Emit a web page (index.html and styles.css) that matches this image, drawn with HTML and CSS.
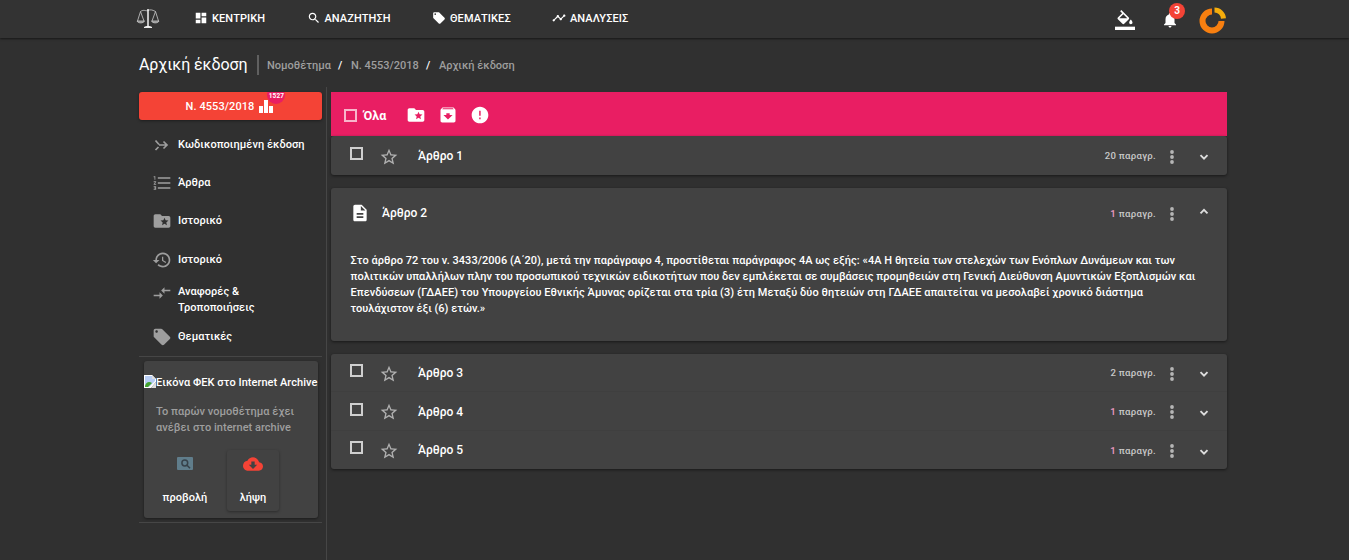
FILE: index.html
```
<!DOCTYPE html>
<html lang="el">
<head>
<meta charset="utf-8">
<title>Αρχική έκδοση</title>
<link rel="stylesheet" href="styles.css">
</head>
<body>
<svg class="defs" width="0" height="0">
<symbol id="dash" viewBox="0 0 24 24"><path d="M3 13h8V3H3v10zm0 8h8v-6H3v6zm10 0h8V11h-8v10zm0-18v6h8V3h-8z"/></symbol>
<symbol id="search" viewBox="0 0 24 24"><path d="M15.5 14h-.79l-.28-.27C15.41 12.59 16 11.11 16 9.5 16 5.91 13.09 3 9.5 3S3 5.91 3 9.5 5.91 16 9.5 16c1.61 0 3.09-.59 4.23-1.57l.27.28v.79l5 4.99L20.49 19l-4.99-5zm-6 0C7.01 14 5 11.99 5 9.5S7.01 5 9.5 5 14 7.01 14 9.5 11.99 14 9.5 14z"/></symbol>
<symbol id="tag" viewBox="0 0 24 24"><path d="M21.41 11.58l-9-9C12.05 2.22 11.55 2 11 2H4c-1.1 0-2 .9-2 2v7c0 .55.22 1.05.59 1.42l9 9c.36.36.86.58 1.41.58.55 0 1.05-.22 1.41-.59l7-7c.37-.36.59-.86.59-1.41 0-.55-.23-1.06-.59-1.42zM5.5 7C4.67 7 4 6.33 4 5.5S4.67 4 5.5 4 7 4.67 7 5.5 6.33 7 5.5 7z"/></symbol>
<symbol id="line" viewBox="0 0 24 24"><path d="M23 8c0 1.1-.9 2-2 2-.18 0-.35-.02-.51-.07l-3.56 3.55c.05.16.07.34.07.52 0 1.1-.9 2-2 2s-2-.9-2-2c0-.18.02-.36.07-.52l-2.55-2.55c-.16.05-.34.07-.52.07s-.36-.02-.52-.07l-4.55 4.56c.05.16.07.33.07.51 0 1.1-.9 2-2 2s-2-.9-2-2 .9-2 2-2c.18 0 .35.02.51.07l4.56-4.55C8.02 9.36 8 9.18 8 9c0-1.1.9-2 2-2s2 .9 2 2c0 .18-.02.36-.07.52l2.55 2.55c.16-.05.34-.07.52-.07s.36.02.52.07l3.55-3.56C19.02 8.35 19 8.18 19 8c0-1.1.9-2 2-2s2 .9 2 2z"/></symbol>
<symbol id="fill" viewBox="0 0 24 24"><path d="M16.56 8.94L7.62 0 6.21 1.41l2.38 2.38-5.15 5.15c-.59.59-.59 1.54 0 2.12l5.5 5.5c.29.29.68.44 1.06.44s.77-.15 1.06-.44l5.5-5.5c.59-.58.59-1.53 0-2.12zM5.21 10L10 5.21 14.79 10H5.21zM19 11.5s-2 2.17-2 3.5c0 1.1.9 2 2 2s2-.9 2-2c0-1.33-2-3.5-2-3.5z"/><path d="M0 20h24v4H0z"/></symbol>
<symbol id="bell" viewBox="0 0 24 24"><path d="M12 22c1.1 0 2-.9 2-2h-4c0 1.1.89 2 2 2zm6-6v-5c0-3.07-1.64-5.64-4.5-6.32V4c0-.83-.67-1.5-1.5-1.5s-1.5.67-1.5 1.5v.68C7.63 5.36 6 7.92 6 11v5l-2 2v1h16v-1l-2-2z"/></symbol>
<symbol id="merge" viewBox="0 0 18 18"><path d="M2.500 4.500l3.500 4M2.500 14l3-3M6 9h8M10.500 5.500L14 9l-3.500 3.500" fill="none" stroke="currentColor" stroke-width="1.700"/></symbol>
<symbol id="numbers" viewBox="0 0 24 24"><path d="M2 17h2v.5H3v1h1v.5H2v1h3v-4H2v1zm1-9h1V4H2v1h1v3zm-1 3h1.8L2 13.1v.9h3v-1H3.2L5 10.9V10H2v1zm5-6v2h15V5H7zm0 14h15v-2H7v2zm0-6h15v-2H7v2z"/></symbol>
<symbol id="folder" viewBox="0 0 24 24"><path d="M20 6h-8l-2-2H4c-1.1 0-1.99.9-1.99 2L2 18c0 1.1.9 2 2 2h16c1.1 0 2-.9 2-2V8c0-1.1-.9-2-2-2zm-2.060 11L15 15.280 12.060 17l.78-3.330-2.590-2.240 3.410-.29L15 8l1.340 3.140 3.410.29-2.590 2.240.78 3.330z"/></symbol>
<symbol id="history" viewBox="0 0 24 24"><path d="M13 3c-4.97 0-9 4.03-9 9H1l3.89 3.89.07.14L9 12H6c0-3.87 3.13-7 7-7s7 3.13 7 7-3.13 7-7 7c-1.93 0-3.68-.79-4.94-2.06l-1.42 1.42C8.27 19.99 10.51 21 13 21c4.97 0 9-4.03 9-9s-4.03-9-9-9zm-1 5v5l4.28 2.54.72-1.21-3.500-2.080V8H12z"/></symbol>
<symbol id="compare" viewBox="0 0 24 24"><path d="M9.010 14H2v2h7.010v3L13 15l-3.990-4v3zm5.980-1v-3H22V8h-7.010V5L11 9l3.990 4z"/></symbol>
<symbol id="archive" viewBox="0 0 24 24"><path d="M20.540 5.230l-1.390-1.680C18.880 3.210 18.470 3 18 3H6c-.47 0-.88.21-1.160.55L3.460 5.230C3.170 5.570 3 6.020 3 6.500V19c0 1.100.9 2 2 2h14c1.100 0 2-.9 2-2V6.500c0-.48-.17-.93-.46-1.270zM12 17.500L6.500 12H10v-2h4v2h3.500L12 17.500zM5.120 5l.81-1h12l.94 1H5.120z"/></symbol>
<symbol id="error" viewBox="0 0 24 24"><path d="M12 2C6.480 2 2 6.480 2 12s4.480 10 10 10 10-4.480 10-10S17.520 2 12 2zm.8 15h-1.800v-2h1.800v2zm0-4h-1.800V7h1.800v6z"/></symbol>
<symbol id="star" viewBox="0 0 24 24"><path d="M22 9.240l-7.190-.62L12 2 9.190 8.630 2 9.240l5.460 4.730L5.820 21 12 17.270 18.180 21l-1.630-7.030L22 9.240zM12 15.400l-3.760 2.270 1-4.280-3.320-2.880 4.380-.38L12 6.100l1.710 4.040 4.380.38-3.320 2.880 1 4.280L12 15.400z"/></symbol>
<symbol id="doc" viewBox="0 0 24 24"><path d="M14 2H6c-1.100 0-1.990.9-1.990 2L4 20c0 1.100.89 2 1.990 2H18c1.100 0 2-.9 2-2V8l-6-6zm2 16H8v-2h8v2zm0-4H8v-2h8v2zm-3-5V3.500L18.500 9H13z"/></symbol>
<symbol id="cloud" viewBox="0 0 24 24"><path d="M19.350 10.040C18.670 6.590 15.640 4 12 4 9.110 4 6.600 5.640 5.350 8.040 2.340 8.360 0 10.910 0 14c0 3.310 2.690 6 6 6h13c2.760 0 5-2.240 5-5 0-2.640-2.050-4.780-4.650-4.960zM17 13l-5 5-5-5h3V9h4v4h3z"/></symbol>
<symbol id="box" viewBox="0 0 13 13"><rect x="1" y="1" width="11" height="11" fill="none" stroke="currentColor" stroke-width="2"/></symbol>
<symbol id="dots" viewBox="0 0 6 14"><circle cx="3" cy="2" r="1.900"/><circle cx="3" cy="7" r="1.900"/><circle cx="3" cy="12" r="1.900"/></symbol>
<symbol id="down" viewBox="0 0 10 7"><path d="M1.500 1.200L5 4.700l3.500-3.500" fill="none" stroke="currentColor" stroke-width="1.900"/></symbol>
<symbol id="up" viewBox="0 0 10 7"><path d="M1.500 5.300L5 1.800l3.500 3.500" fill="none" stroke="currentColor" stroke-width="1.900"/></symbol>
</svg>

<header class="topbar">
  <svg class="logo" viewBox="0 0 24 22" fill="none" stroke="#ccc" stroke-width=".8"><path d="M4.500 3.500C8 1 10 3.500 12 2.500s4-1 7.500 1M4.500 3.500L1.500 13M4.500 3.500L8 13M19.500 3.500L16 13M19.500 3.500L22.500 13"/><path d="M1 13h7.500c-1 2.500-6.500 2.500-7.500 0zM15.500 13H23c-1 2.500-6.500 2.500-7.500 0z" fill="#888"/><path d="M12 1v18" stroke="#fff" stroke-width="1.400"/><path d="M8 19.500c1-1.500 7-1.500 8 0z" fill="#fff" stroke="#fff"/></svg>
  <nav class="nav">
    <a class="nav-dash"><svg class="i14"><use href="#dash"/></svg><span>ΚΕΝΤΡΙΚΗ</span></a>
    <a class="nav-search"><svg class="i14"><use href="#search"/></svg><span>ΑΝΑΖΗΤΗΣΗ</span></a>
    <a class="nav-tag"><svg class="i14"><use href="#tag"/></svg><span>ΘΕΜΑΤΙΚΕΣ</span></a>
    <a class="nav-line"><svg class="i14"><use href="#line"/></svg><span>ΑΝΑΛΥΣΕΙΣ</span></a>
  </nav>
  <div class="tools">
    <svg class="i20 fill"><use href="#fill"/></svg>
    <span class="bell"><svg class="i18"><use href="#bell"/></svg><b>3</b></span>
    <svg class="ring" viewBox="0 0 28 28" fill="none"><path d="M13 5.500A9.500 9.500 0 1 0 22.500 15" stroke="#f77f10" stroke-width="6"/><path d="M15.500 4A9 9 0 0 1 24.500 12.500" stroke="#f5ad0c" stroke-width="5"/></svg>
  </div>
</header>

<div class="heading">
  <h1>Αρχική έκδοση</h1>
  <div class="crumbs"><span>Νομοθέτημα</span><i>/</i><span>Ν. 4553/2018</span><i>/</i><span>Αρχική έκδοση</span></div>
</div>

<div class="content">
  <aside>
    <a class="law"><span>Ν. 4553/2018</span><span class="chart"><svg viewBox="0 0 14 14"><path d="M0 7h4v7H0zM5 1h4v13H5zM10 7h4v7h-4z"/></svg><b>1527</b></span></a>
    <ul class="side">
      <li><svg class="i18 merge"><use href="#merge"/></svg><span>Κωδικοποιημένη έκδοση</span></li>
      <li><svg class="i20"><use href="#numbers"/></svg><span>Άρθρα</span></li>
      <li><svg class="i20"><use href="#folder"/></svg><span>Ιστορικό</span></li>
      <li><svg class="i20"><use href="#history"/></svg><span>Ιστορικό</span></li>
      <li class="two"><svg class="i20"><use href="#compare"/></svg><span>Αναφορές &amp;<br>Τροποποιήσεις</span></li>
      <li class="last"><svg class="i20"><use href="#tag"/></svg><span>Θεματικές</span></li>
    </ul>
    <div class="archive-wrap">
      <section class="card">
        <div class="missing"><svg viewBox="0 0 12 13"><path d="M0 0h8l4 4v3l-5 6H0z" fill="#fff"/><path d="M1 1h7v3h3v2L5 12H1z" fill="#b7cdf5"/><path d="M1 11c1-4 4-5 7-3l-4 4H1z" fill="#43a32f"/><path d="M8 0v4h4M7 13l5-6v6z" fill="#ddd"/></svg><span>Εικόνα ΦΕΚ στο Internet Archive</span></div>
        <p>Το παρών νομοθέτημα έχει<br>ανέβει στο internet archive</p>
        <div class="actions">
          <a><svg class="view" viewBox="0 0 16 13"><rect width="16" height="13" rx="1" fill="#607d8b"/><circle cx="7.800" cy="6" r="2.900" fill="none" stroke="#37424a" stroke-width="1.500"/><path d="M10 8.200l3 3" stroke="#37424a" stroke-width="1.600"/></svg><span>προβολή</span></a>
          <a class="raised"><svg class="i20 cloud"><use href="#cloud"/></svg><span>λήψη</span></a>
        </div>
      </section>
    </div>
  </aside>

  <main>
    <div class="bulk"><svg class="box"><use href="#box"/></svg><span>Όλα</span><svg class="i20"><use href="#folder"/></svg><svg class="i20"><use href="#archive"/></svg><svg class="i20"><use href="#error"/></svg></div>
    <div class="group first">
      <div class="row"><svg class="box"><use href="#box"/></svg><svg class="i20 star"><use href="#star"/></svg><span class="name">Άρθρο 1</span><span class="count">20 παραγρ.</span><svg class="dots"><use href="#dots"/></svg><svg class="arrow"><use href="#down"/></svg></div>
    </div>
    <article class="open">
      <div class="row"><svg class="i20 doc"><use href="#doc"/></svg><span class="name">Άρθρο 2</span><span class="count"><em>1</em> παραγρ.</span><svg class="dots"><use href="#dots"/></svg><svg class="arrow"><use href="#up"/></svg></div>
      <p><span class="l1">Στο άρθρο 72 του ν. 3433/2006 (Α΄20), μετά την παράγραφο 4, προστίθεται παράγραφος 4Α ως εξής: «4Α Η θητεία των στελεχών των Ενόπλων Δυνάμεων και των</span><br><span class="l2">πολιτικών υπαλλήλων πλην του προσωπικού τεχνικών ειδικοτήτων που δεν εμπλέκεται σε συμβάσεις προμηθειών στη Γενική Διεύθυνση Αμυντικών Εξοπλισμών και</span><br><span class="l3">Επενδύσεων (ΓΔΑΕΕ) του Υπουργείου Εθνικής Άμυνας ορίζεται στα τρία (3) έτη Μεταξύ δύο θητειών στη ΓΔΑΕΕ απαιτείται να μεσολαβεί χρονικό διάστημα</span><br><span>τουλάχιστον έξι (6) ετών.»</span></p>
    </article>
    <div class="group">
      <div class="row r3"><svg class="box"><use href="#box"/></svg><svg class="i20 star"><use href="#star"/></svg><span class="name">Άρθρο 3</span><span class="count">2 παραγρ.</span><svg class="dots"><use href="#dots"/></svg><svg class="arrow"><use href="#down"/></svg></div>
      <div class="row r4"><svg class="box"><use href="#box"/></svg><svg class="i20 star"><use href="#star"/></svg><span class="name">Άρθρο 4</span><span class="count"><em>1</em> παραγρ.</span><svg class="dots"><use href="#dots"/></svg><svg class="arrow"><use href="#down"/></svg></div>
      <div class="row r5"><svg class="box"><use href="#box"/></svg><svg class="i20 star"><use href="#star"/></svg><span class="name">Άρθρο 5</span><span class="count"><em>1</em> παραγρ.</span><svg class="dots"><use href="#dots"/></svg><svg class="arrow"><use href="#down"/></svg></div>
    </div>
  </main>
</div>
</body>
</html>
```
FILE: styles.css
```
* { box-sizing: border-box; }
body { margin: 0; height: 560px; overflow: hidden; background: #303030; color: #fff; font: 500 11px/16px Roboto, "Noto Sans", sans-serif; display: flex; flex-direction: column; }
svg { fill: currentColor; flex: none; display: block; }
.defs { display: none; }
.i14 { width: 14px; height: 14px; }
.i18 { width: 18px; height: 18px; }
.i20 { width: 20px; height: 20px; }
i, em { font-style: normal; }

.topbar { height: 38px; flex: none; background: #333; box-shadow: 0 1px 2px rgba(0,0,0,.55); display: flex; padding-left: 136px; align-items: center; }
.logo { width: 24px; height: 22px; fill: none; }
.nav { display: flex; padding-left: 34px; width: 955px; letter-spacing: .08px; }
.nav a { display: flex; gap: 4px; align-items: center; height: 36px; }
.nav svg { margin-top: -2px; }
.nav-dash { width: 112.500px; }
.nav-search { width: 125.500px; }
.nav-tag { width: 120px; }
.tools { display: flex; align-items: center; height: 38px; }
.fill { margin-top: 2px; }
.bell { position: relative; margin-left: 25px; margin-top: 2px; }
.bell svg { margin-left: 1px; }
.bell b { position: absolute; left: 9px; top: -8px; width: 16px; height: 16px; border-radius: 50%; background: #f44336; text-align: center; font-size: 10px; line-height: 16px; }
.ring { width: 28px; height: 28px; margin-left: 20px; margin-top: 1px; fill: none; }

.heading { height: 49px; flex: none; display: flex; align-items: center; padding: 5px 0 0 139px; }
h1 { margin: 0; font-size: 16px; font-weight: 400; line-height: 20px; width: 118px; white-space: nowrap; letter-spacing: -.07px; }
.crumbs { display: flex; align-items: center; height: 20px; border-left: 2px solid #606060; padding: 2px 0 0 8px; color: #9e9e9e; }
.crumbs i { color: #fff; width: 20px; padding-left: 7px; }

.content { display: flex; flex: 1; padding-left: 139px; }
aside { width: 188px; border-right: 1px solid #464646; padding: 5px 4px 0 0; }
.law { display: flex; height: 28px; justify-content: center; align-items: center; gap: 5px; background: #f44336; border-radius: 3px; box-shadow: 0 1px 3px rgba(0,0,0,.4); overflow: hidden; letter-spacing: .08px; }
.law > span:first-child { margin-left: -2px; padding-top: 1px; }
.chart { position: relative; }
.chart svg { width: 14px; height: 14px; }
.chart b { position: absolute; left: 8px; top: -13px; width: 18px; height: 18px; border-radius: 50%; background: #e91e63; font-size: 6.500px; line-height: 20px; text-align: center; letter-spacing: .1px; }
.side { list-style: none; margin: 5px 0 0; padding: 0 0 0 13px; height: 231px; }
.side li { display: flex; gap: 6px; height: 38.400px; align-items: center; letter-spacing: .04px; }
.side span { padding-top: 1px; }
.side svg { color: #9e9e9e; margin-top: 1px; }
.side .merge { margin: 2px 1px 0; }
.side li.two { height: 42px; }
.side li.two span { padding-top: 0; }
.side li.two svg { margin-top: -13px; }
.side li.last { height: 32px; }
.side li.last span { padding-top: 0; }
.archive-wrap { border: solid #464646; border-width: 1px 0; height: 167px; padding: 4px 4px 4px 5px; }
.card { height: 157px; width: 174px; background: #424242; border-radius: 3px; box-shadow: 0 1px 3px rgba(0,0,0,.45); padding-top: 14px; }
.missing { display: flex; height: 16px; align-items: center; white-space: nowrap; letter-spacing: .05px; }
.missing svg { width: 12px; height: 13px; margin-top: -3px; }
.card p { margin: 13px 0 0 12px; color: #9e9e9e; white-space: nowrap; letter-spacing: .03px; }
.actions { display: flex; margin: 14px 0 0 14px; gap: 12px; }
.actions a { display: flex; flex-direction: column; align-items: center; width: 54px; height: 61px; padding-top: 7px; letter-spacing: .05px; }
.actions .view { width: 16px; height: 13px; }
.actions a span { margin-top: 20px; }
.actions .raised { width: 52px; margin-left: 3px; padding-top: 4px; border-radius: 3px; box-shadow: 0 1px 3px rgba(0,0,0,.35); }
.actions .cloud { color: #f44336; }
.actions .raised span { margin-top: 16px; }

main { width: 900px; padding: 5px 0 0 4px; }
.bulk { height: 44px; background: #e91e63; display: flex; align-items: center; padding: 3px 0 0 13px; font-size: 12.500px; font-weight: 700; }
.box { width: 13px; height: 13px; color: #cfcfcf; }
.bulk .box { color: #f8b5cb; }
.bulk span { width: 42.500px; margin-left: 6.500px; letter-spacing: .2px; }
.bulk .i20 { margin-right: 12px; margin-top: -1px; }
.group, .open { background: #424242; border-radius: 3px; box-shadow: 0 1px 3px rgba(0,0,0,.5); }
.first { height: 39px; margin-bottom: 13px; }
.row { display: flex; align-items: center; height: 39px; padding-left: 19px; }
.group .row + .row { border-top: 1px solid #3f3f3f; }
.row.r3 { height: 37px; }
.row .box { margin-top: -4px; }
.star { margin: 2px 0 0 16px; color: #b0b0b0; }
.name { width: 686px; margin-left: 19px; font-size: 12px; }
.count { width: 52px; text-align: right; font-size: 9.600px; letter-spacing: .3px; color: #c9c9c9; white-space: nowrap; }
em { color: #ee9cc4; }
.dots { width: 6px; height: 14px; margin: 2px 0 0 13.400px; color: #b5b5b5; }
.arrow { width: 10px; height: 7px; margin: 3px 0 0 23.600px; color: #ddd; }
.r4 .name, .r4 .count, .r5 .count, .open .count { padding-top: 1px; }
.r4 .arrow, .r5 .arrow { margin-top: 5px; }
.r5 .box { margin-top: -6px; }
.open { height: 153px; margin-bottom: 13px; }
.open .row { height: 50px; padding-left: 19px; }
.open .name { width: 722px; margin-left: 12px; }
.open .arrow { margin-top: -4px; }
.open p { margin: 15px 0 0 19.500px; white-space: nowrap; line-height: 16px; }
.l1 { letter-spacing: .04px; }
.l2 { letter-spacing: .03px; }
.l3 { letter-spacing: .055px; }
```
